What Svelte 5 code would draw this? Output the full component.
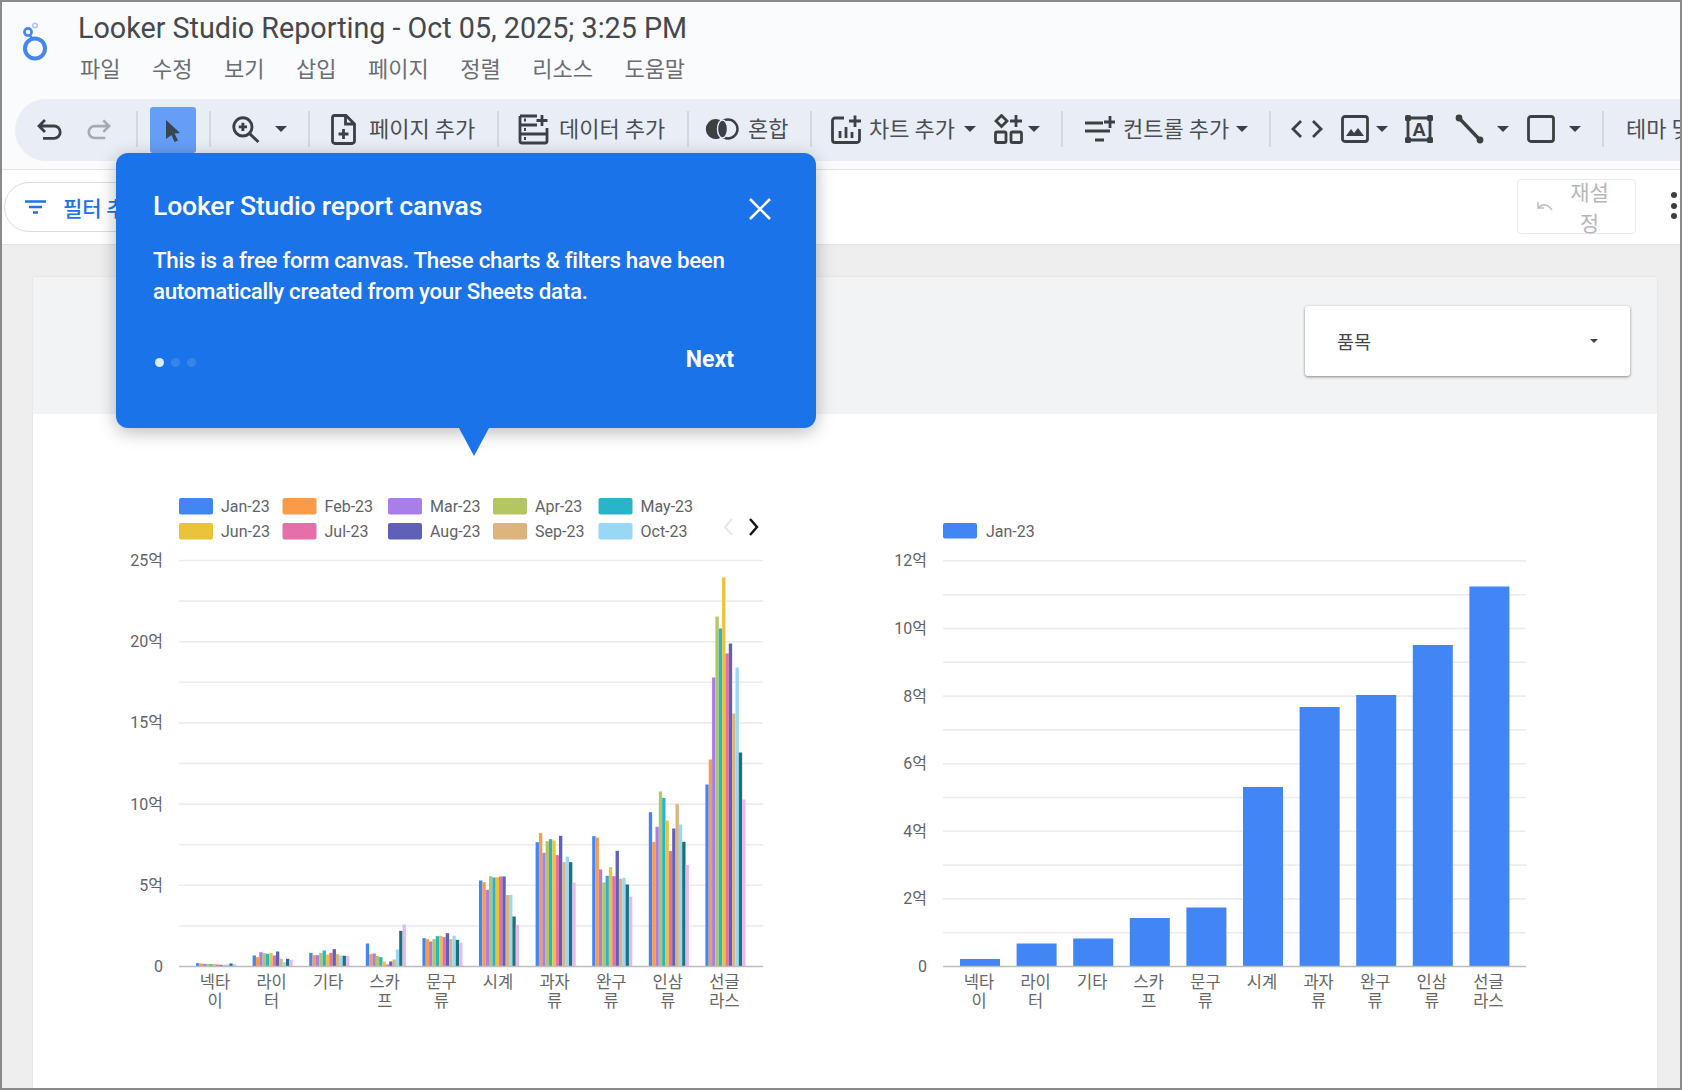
<script>
  const colors = ['#4285f4','#fa9b4b','#a97ee8','#b3c662','#27b6c9','#ebc33b','#e66fa9','#6060b8','#dcb47c','#98d8f5','#1a7378','#e6b8f2'];
  const cats = [['넥타','이'],['라이','터'],['기타'],['스카','프'],['문구','류'],['시계'],['과자','류'],['완구','류'],['인삼','류'],['선글','라스']];
  // bar heights in pixels, series by series, per category
  const z = (a) => a.map((t) => (558 - t) / 3);
  const groups = [
    z([548,549,550,550,551,550,552,553,553,552,549,551]),
    z([525,530,515,518,520,517,525,513,535,545,535,538]),
    z([517,524,524,517,510,522,517,506,521,525,526,526]),
    z([489,521,519,526,530,543,552,543,537,507,451,432]),
    z([473,476,483,476,467,466,470,458,476,466,478,487]),
    z([300,305,328,287,291,290,288,288,344,343,408,433]),
    z([185,158,217,182,176,180,224,166,245,228,245,306]),
    z([167,171,267,306,286,260,287,211,295,292,312,348]),
    z([95,184,139,33,52,120,212,144,71,132,184,253]),
    [182,207,289,350,338,389,313,323,253,299,214,167]
  ];
  const legend = [
    ['Jan-23',0,0,59],['Feb-23',1,0,162.5],['Mar-23',2,0,268],['Apr-23',3,0,373],['May-23',4,0,478.5],
    ['Jun-23',5,1,59],['Jul-23',6,1,162.5],['Aug-23',7,1,268],['Sep-23',8,1,373],['Oct-23',9,1,478.5]
  ];
  const base = 486.5; // x axis inside the chart svg
  const leftGrid = Array.from({ length: 10 }, (_, i) => base - (i + 1) * 40.6);
  const leftTicks = ['0','5억','10억','15억','20억','25억'];
  const rightGrid = Array.from({ length: 12 }, (_, i) => base - (i + 1) * 33.8);
  const rightTicks = ['0','2억','4억','6억','8억','10억','12억'];
  const rightBars = [7.5,23,28,48.5,59,179.5,259.5,271.5,321.5,380];
  const menu = ['파일','수정','보기','삽입','페이지','정렬','리소스','도움말'];
</script>

<div class="app">
  <header class="top">
    <div class="brand">
      <svg class="logo" width="28" height="40" viewBox="0 0 28 40">
        <circle cx="14" cy="26.5" r="10" fill="none" stroke="#4285f4" stroke-width="4"/>
        <circle cx="7" cy="10" r="3.6" fill="none" stroke="#4285f4" stroke-width="2.6"/>
        <circle cx="14" cy="3.5" r="2.2" fill="none" stroke="#a9c6f8" stroke-width="1.6"/>
        <path d="M9 13 L11 17" stroke="#4285f4" stroke-width="2.4"/>
      </svg>
      <div class="titles">
        <div class="title">Looker Studio Reporting - Oct 05, 2025; 3:25 PM</div>
        <nav class="menu">
          {#each menu as m}<span>{m}</span>{/each}
        </nav>
      </div>
    </div>

    <div class="toolbar">
      <svg class="i" width="25" height="24" viewBox="0 0 25 24"><path d="M8 3 L2 9 L8 15 M2 9 H17 a6.2 6.2 0 0 1 0 12.4 H6" class="s"/></svg>
      <svg class="i m25 off" width="24" height="24" viewBox="0 0 25 24"><path d="M17 3 L23 9 L17 15 M23 9 H8 a6.2 6.2 0 0 0 0 12.4 H19" class="s"/></svg>
      <i class="sep m25"></i>
      <div class="active m12">
        <svg width="16" height="22" viewBox="0 0 16 22"><path d="M1 0 L15 13 L9.5 13.5 L13 20.5 L9.5 22 L6.5 15 L1 19 Z" fill="#37474f"/></svg>
      </div>
      <i class="sep m13"></i>
      <svg class="i m21" width="28" height="27" viewBox="0 0 27 26"><circle cx="10.5" cy="10.5" r="8.8" class="s"/><path d="M17 17 L25.5 25 M10.5 6.5 V14.5 M6.5 10.5 H14.5" class="s"/></svg>
      <i class="caret m15"></i>
      <i class="sep m21"></i>
      <svg class="i m21" width="25" height="31" viewBox="0 0 25 31"><path d="M3.5 1.5 H15 L23.5 10 V27 a2.5 2.5 0 0 1 -2.5 2.5 H4 a2.5 2.5 0 0 1 -2.5 -2.5 V3.5 a2 2 0 0 1 2 -2 Z M14.5 1.5 V10 H23.5 M12.5 15 V25 M7.5 20 H17.5" class="s"/></svg>
      <span class="t w105 m13">페이지 추가</span>
      <i class="sep m23"></i>
      <svg class="i m19" width="31" height="31" viewBox="0 0 31 31"><path d="M2 2 H19 M2 2 V27 a2 2 0 0 0 2 2 H27 a2 2 0 0 0 2 -2 V14 M2 11 H19 M2 20 H29 M24 1 V12 M18.5 6.5 H29.5" class="s"/><path d="M6 6 h2 M6 15.5 h2 M6 24.5 h2" class="s"/></svg>
      <span class="t w105 m10">데이터 추가</span>
      <i class="sep m23"></i>
      <svg class="i m16" width="34" height="22" viewBox="0 0 34 22"><circle cx="23" cy="11" r="9.5" fill="#e9eef6" stroke="#3c4043" stroke-width="2.5"/><path d="M11 1 a10 10 0 0 1 3 19.5 a10 10 0 1 1 -3 -19.5 Z" fill="#3c4043"/><ellipse cx="17.5" cy="11" rx="5" ry="9" fill="#3c4043" stroke="#e9eef6" stroke-width="1.4"/></svg>
      <span class="t w39 m9">혼합</span>
      <i class="sep m23"></i>
      <svg class="i m19" width="30" height="29" viewBox="0 0 30 29"><path d="M13 3 H4 a2.5 2.5 0 0 0 -2.5 2.5 V25 a2.5 2.5 0 0 0 2.5 2.5 H26 a2.5 2.5 0 0 0 2.5 -2.5 V14 M24 0.5 V12 M18 6 H30 M9 23 V16 M15 23 V12 M21 23 V17" class="s"/></svg>
      <span class="t w85 m8">차트 추가</span>
      <i class="caret m10"></i>
      <svg class="i m18" width="29" height="30" viewBox="0 0 29 30"><path d="M7.5 1.5 L13 7 L7.5 12.5 L2 7 Z M22 1 V13 M16 7 H28" class="s"/><rect x="1.5" y="18" width="10.5" height="10.5" rx="1.5" class="s"/><rect x="17" y="18" width="10.5" height="10.5" rx="1.5" class="s"/></svg>
      <i class="caret m5"></i>
      <i class="sep m21"></i>
      <svg class="i m22" width="30" height="26" viewBox="0 0 30 26"><path d="M0 7 H18 M0 15 H25 M10 24 H19 M25 0 V12 M19 6 H30" class="s"/></svg>
      <span class="t w105 m8">컨트롤 추가</span>
      <i class="caret m8"></i>
      <i class="sep m21"></i>
      <svg class="i m20" width="32" height="22" viewBox="0 0 32 22"><path d="M10 3 L2 11 L10 19 M22 3 L30 11 L22 19" class="s"/></svg>
      <svg class="i m18" width="28" height="28" viewBox="0 0 28 28"><rect x="1.5" y="1.5" width="25" height="25" rx="2.5" class="s"/><path d="M5 21 L10 14 L13 18 L17 13 L23 21 Z" fill="#3c4043"/></svg>
      <i class="caret m7"></i>
      <svg class="i m17" width="28" height="28" viewBox="0 0 28 28"><path d="M3 3 H25 V25 H3 Z" class="s"/><rect x="0" y="0" width="6" height="6" rx="1.5" fill="#3c4043"/><rect x="22" y="0" width="6" height="6" rx="1.5" fill="#3c4043"/><rect x="0" y="22" width="6" height="6" rx="1.5" fill="#3c4043"/><rect x="22" y="22" width="6" height="6" rx="1.5" fill="#3c4043"/><text x="14" y="21" text-anchor="middle" class="a">A</text></svg>
      <svg class="i m22" width="29" height="30" viewBox="0 0 29 30"><path d="M4 4 L25 26" stroke="#3c4043" stroke-width="3.4" fill="none"/><circle cx="4" cy="4" r="3.4" fill="#3c4043"/><circle cx="25" cy="26" r="3.4" fill="#3c4043"/></svg>
      <i class="caret m13"></i>
      <svg class="i m18" width="28" height="28" viewBox="0 0 28 28"><rect x="1.5" y="1.5" width="25" height="25" rx="2.5" class="s"/></svg>
      <i class="caret m14"></i>
      <i class="sep m21"></i>
      <span class="t m22 nw">테마 및 레이아웃</span>
    </div>
  </header>

  <div class="filterbar">
    <div class="filterpill">
      <svg width="21" height="14" viewBox="0 0 21 14"><path d="M0 1.5 H21 M4 7 H17 M8 12.5 H13" stroke="#1a73e8" stroke-width="2.4" fill="none"/></svg>
      <span>필터 추가</span>
    </div>
    <div class="right">
      <div class="reset">
        <svg width="17" height="12" viewBox="0 0 17 12"><path d="M1 1 V7 H7 M1.5 7 C4 3 10 2 15 9" fill="none" stroke="#bdc1c6" stroke-width="1.6"/></svg>
        <span>재설<br/>정</span>
      </div>
      <div class="dots"><b></b><b></b><b></b></div>
    </div>
  </div>

  <main class="canvas">
    <section class="page">
      <div class="band">
        <div class="select"><span>품목</span><i></i></div>
      </div>
      <div class="charts">
        <svg class="chart" width="670" height="550" viewBox="0 0 670 550">
          {#each legend as [name, c, row, x]}
            <rect x={x} y={18 + row * 25} width="34" height="16.5" rx="2" fill={colors[c]}/>
            <text x={x + 42} y={32 + row * 25} class="lg">{name}</text>
          {/each}
          <path d="M612 39 L605 47 L612 55" fill="none" stroke="#e8e8e8" stroke-width="2"/>
          <path d="M630 39 L637 47 L630 55" fill="none" stroke="#111" stroke-width="2.4"/>
          {#each leftGrid as y}<line x1="59" x2="643" y1={y} y2={y} class="grid"/>{/each}
          {#each leftTicks as t, i}
            <text x="43" y={base + 5.5 - i * 81.2} text-anchor="end" class="tick">{t}</text>
          {/each}
          {#each groups as g, gi}
            {#each g as h, si}
              <rect x={76 + gi * 56.6 + si * 3.34} y={base - h} width="3.34" height={h} fill={colors[si]}/>
            {/each}
          {/each}
          <line x1="59" x2="643" y1={base} y2={base} class="axis"/>
          {#each cats as c, i}
            {#each c as line, li}
              <text x={95 + i * 56.6} y={508 + li * 19} text-anchor="middle" class="cat">{line}</text>
            {/each}
          {/each}
        </svg>
        <svg class="chart" width="670" height="550" viewBox="0 0 670 550">
          <rect x="63" y="43" width="34" height="15.5" rx="2" fill="#4285f4"/>
          <text x="106" y="56.5" class="lg">Jan-23</text>
          {#each rightGrid as y}<line x1="63" x2="646" y1={y} y2={y} class="grid"/>{/each}
          {#each rightTicks as t, i}
            <text x="47" y={base + 5.5 - i * 67.6} text-anchor="end" class="tick">{t}</text>
          {/each}
          {#each rightBars as h, i}
            <rect x={80 + i * 56.6} y={base - h} width="40" height={h} fill="#4285f4"/>
          {/each}
          <line x1="63" x2="646" y1={base} y2={base} class="axis"/>
          {#each cats as c, i}
            {#each c as line, li}
              <text x={99 + i * 56.6} y={508 + li * 19} text-anchor="middle" class="cat">{line}</text>
            {/each}
          {/each}
        </svg>
      </div>
    </section>
  </main>

  <aside class="tip">
    <div class="tiphead">
      <h2>Looker Studio report canvas</h2>
      <svg width="24" height="24" viewBox="0 0 24 24"><path d="M2 2 L22 22 M22 2 L2 22" stroke="#fff" stroke-width="2.6"/></svg>
    </div>
    <p>This is a free form canvas. These charts &amp; filters have been<br/>automatically created from your Sheets data.</p>
    <div class="tipfoot">
      <div class="pager"><b class="on"></b><b></b><b></b></div>
      <span>Next</span>
    </div>
    <i class="arrow"></i>
  </aside>
</div>

<style>
  :global(body) { margin: 0; background: #eee; }
  .app {
    position: relative;
    width: 1682px;
    height: 1090px;
    overflow: hidden;
    font-family: "Noto Sans CJK KR", Roboto, sans-serif;
    background: #eeeeee;
    color: #3c4043;
  }
  .app::after {
    content: "";
    position: absolute;
    inset: 0;
    border: 2px solid #8a8a8a;
    pointer-events: none;
    z-index: 5;
  }
  .top {
    height: 169px;
    background: #f9fbfd;
    border-bottom: 1px solid #e3e3e3;
    box-sizing: content-box;
  }
  .brand { display: flex; padding-left: 21px; height: 99px; }
  .logo { margin-top: 22px; }
  .titles { margin-left: 29px; padding-top: 13px; }
  .title {
    font-family: Roboto, sans-serif;
    font-size: 28.7px;
    line-height: 30px;
    color: #45484c;
    white-space: nowrap;
  }
  .menu {
    display: flex;
    gap: 31.5px;
    margin-top: 9px;
    padding-left: 2px;
    font-size: 22px;
    line-height: 30px;
    color: #6a6e73;
  }
  .toolbar {
    display: flex;
    align-items: center;
    height: 62px;
    box-sizing: border-box;
    margin-left: 15px;
    padding: 0 0 2px 22px;
    background: #e9eef6;
    border-radius: 31px 0 0 31px;
    overflow: hidden;
  }
  .i { flex: none; display: block; }
  .s { fill: none; stroke: #3c4043; stroke-width: 2.8; }
  .off .s { stroke: #a8abae; }
  .a { font: 700 19px "Liberation Sans", sans-serif; fill: #3c4043; }
  .sep { flex: none; width: 2px; height: 36px; background: #d5d8dc; }
  .active {
    flex: none;
    width: 46px;
    height: 46px;
    align-self: flex-start;
    margin-top: 8px;
    background: #669df6;
    border-radius: 3px;
    display: flex;
    justify-content: center;
    padding-top: 13px;
    box-sizing: border-box;
  }
  .caret {
    flex: none;
    width: 0;
    height: 0;
    border-left: 6px solid transparent;
    border-right: 6px solid transparent;
    border-top: 6px solid #3c4043;
  }
  .t {
    flex: none;
    font-size: 22px;
    line-height: 30px;
    margin-bottom: 4px;
    white-space: nowrap;
    color: #4a4e53;
  }
  .nw { white-space: nowrap; }
  .w105 { width: 105px; }
  .w85 { width: 85px; }
  .w39 { width: 39px; }
  .m5 { margin-left: 5px; }
  .m7 { margin-left: 7px; }
  .m8 { margin-left: 8px; }
  .m9 { margin-left: 9px; }
  .m10 { margin-left: 10px; }
  .m12 { margin-left: 12px; }
  .m13 { margin-left: 13px; }
  .m14 { margin-left: 14px; }
  .m15 { margin-left: 15px; }
  .m16 { margin-left: 16px; }
  .m17 { margin-left: 17px; }
  .m18 { margin-left: 18px; }
  .m19 { margin-left: 19px; }
  .m20 { margin-left: 20px; }
  .m21 { margin-left: 21px; }
  .m22 { margin-left: 22px; }
  .m23 { margin-left: 23px; }
  .m25 { margin-left: 25px; }

  .filterbar {
    display: flex;
    justify-content: space-between;
    height: 74px;
    background: #fff;
    border-bottom: 1px solid #e3e3e3;
    padding-left: 4px;
  }
  .filterpill {
    display: flex;
    align-items: center;
    gap: 17px;
    width: 220px;
    height: 50px;
    margin-top: 12px;
    padding-left: 20px;
    box-sizing: border-box;
    border: 1px solid #dadce0;
    border-radius: 25px;
    color: #1a73e8;
    font-size: 21px;
    font-weight: 500;
    white-space: nowrap;
  }
  .right { display: flex; padding-right: 5px; }
  .reset {
    display: flex;
    align-items: center;
    width: 119px;
    height: 55px;
    margin-top: 9px;
    box-sizing: border-box;
    padding-left: 19px;
    border: 1px solid #e8eaed;
    border-radius: 4px;
    color: #b4b7bb;
    font-size: 21px;
    line-height: 31px;
  }
  .reset span { flex: 1; text-align: center; margin-left: 10px; padding-right: 20px; }
  .dots { display: flex; flex-direction: column; gap: 4.5px; margin: 22px 0 0 35px; }
  .dots b { width: 6px; height: 6px; border-radius: 50%; background: #3c4043; }

  .canvas { height: 846px; padding: 32px 25px 0 33px; box-sizing: border-box; }
  .page { background: #fff; height: 814px; box-shadow: 0 0 2px rgba(0,0,0,.08); }
  .band { height: 137px; background: #f1f3f4; position: relative; display: flex; justify-content: flex-end; padding: 29px 27px 0 0; box-sizing: border-box; }
  .select {
    display: flex;
    justify-content: space-between;
    align-items: center;
    width: 325px;
    height: 70px;
    padding: 0 32px 0 32px;
    box-sizing: border-box;
    background: #fff;
    border-radius: 3px;
    box-shadow: 0 1px 3px rgba(0,0,0,.45);
    font-size: 18.5px;
    color: #444;
  }
  .select i { border-left: 4px solid transparent; border-right: 4px solid transparent; border-top: 4px solid #444; }
  .charts { display: flex; gap: 90px; padding: 65.5px 0 0 87px; }
  .chart { flex: none; display: block; }
  .grid { stroke: #ececec; stroke-width: 1.6; }
  .axis { stroke: #bdbdbd; stroke-width: 1.6; }
  .lg { font: 16px Roboto, sans-serif; fill: #5f6368; }
  .tick { font: 16px Roboto, "Noto Sans CJK KR", sans-serif; fill: #5f6368; }
  .cat { font: 16.5px "Noto Sans CJK KR", sans-serif; fill: #666; }

  .tip {
    position: absolute;
    left: 116px;
    top: 153px;
    width: 700px;
    height: 275px;
    box-sizing: border-box;
    padding: 0 38px 0 37px;
    background: #1a73e8;
    border-radius: 12px;
    box-shadow: 0 4px 18px rgba(0,0,0,.28);
    color: #fff;
    font-family: Roboto, sans-serif;
    z-index: 3;
  }
  .tiphead { display: flex; justify-content: space-between; align-items: center; padding-top: 37px; padding-right: 6px; }
  .tiphead svg { margin-top: 5px; }
  h2 { margin: 0; font-size: 26.6px; line-height: 32px; font-weight: 500; letter-spacing: -0.2px; }
  p { margin: 22.5px 0 0; font-size: 22.3px; line-height: 31px; font-weight: 500; letter-spacing: -0.3px; }
  .tipfoot { display: flex; justify-content: space-between; align-items: center; margin-top: 38px; padding-right: 44px; }
  .tipfoot span { font-size: 23px; font-weight: 700; line-height: 30px; }
  .pager { display: flex; gap: 7px; margin: 5px 0 0 2px; }
  .pager b { width: 9px; height: 9px; border-radius: 50%; background: rgba(255,255,255,.12); }
  .pager b.on { background: #dde8fb; }
  .arrow {
    position: absolute;
    left: 343px;
    top: 275px;
    width: 0;
    height: 0;
    border-left: 15.5px solid transparent;
    border-right: 15.5px solid transparent;
    border-top: 28px solid #1a73e8;
  }
</style>
